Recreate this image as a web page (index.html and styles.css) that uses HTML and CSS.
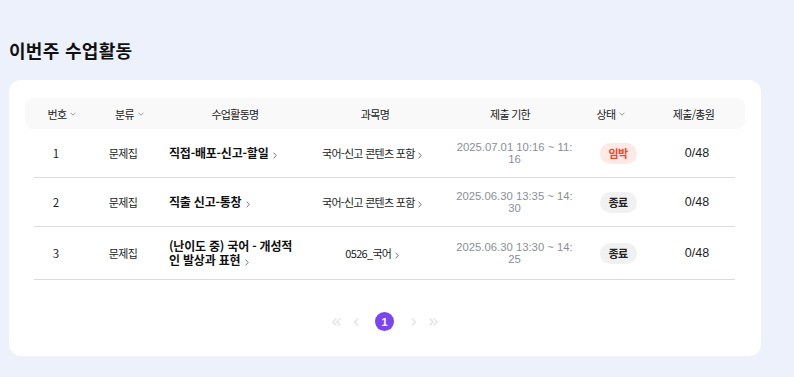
FILE: index.html
```html
<!DOCTYPE html>
<html lang="ko">
<head>
<meta charset="utf-8">
<link rel="stylesheet" href="styles.css">
</head>
<body>
<div class="page">
  <h1 class="title">이번주 수업활동</h1>
  <section class="card">
    <div class="thead">
      <div class="th">번호<svg class="down" viewBox="0 0 6 4"><path d="M0.5 0.7L3 3.2L5.5 0.7"/></svg></div>
      <div class="th">분류<svg class="down" viewBox="0 0 6 4"><path d="M0.5 0.7L3 3.2L5.5 0.7"/></svg></div>
      <div class="th">수업활동명</div>
      <div class="th">과목명</div>
      <div class="th">제출 기한</div>
      <div class="th">상태<svg class="down" viewBox="0 0 6 4"><path d="M0.5 0.7L3 3.2L5.5 0.7"/></svg></div>
      <div class="th">제출/총원</div>
    </div>
    <div class="tbody">
      <div class="tr">
        <div class="td num">1</div>
        <div class="td cat">문제집</div>
        <div class="td act">직접-배포-신고-할일 <svg class="right" viewBox="0 0 4 7"><path d="M0.7 0.7L3.2 3.5L0.7 6.3"/></svg></div>
        <div class="td subj">국어-신고 콘텐츠 포함 <svg class="right" viewBox="0 0 4 7"><path d="M0.7 0.7L3.2 3.5L0.7 6.3"/></svg></div>
        <div class="td due">2025.07.01 10:16 ~ 11:16</div>
        <div class="td state"><span class="badge urgent">임박</span></div>
        <div class="td count">0/48</div>
      </div>
      <div class="tr">
        <div class="td num">2</div>
        <div class="td cat">문제집</div>
        <div class="td act">직출 신고-통창 <svg class="right" viewBox="0 0 4 7"><path d="M0.7 0.7L3.2 3.5L0.7 6.3"/></svg></div>
        <div class="td subj">국어-신고 콘텐츠 포함 <svg class="right" viewBox="0 0 4 7"><path d="M0.7 0.7L3.2 3.5L0.7 6.3"/></svg></div>
        <div class="td due">2025.06.30 13:35 ~ 14:30</div>
        <div class="td state"><span class="badge done">종료</span></div>
        <div class="td count">0/48</div>
      </div>
      <div class="tr">
        <div class="td num">3</div>
        <div class="td cat">문제집</div>
        <div class="td act">(난이도 중) 국어 - 개성적 인 발상과 표현 <svg class="right" viewBox="0 0 4 7"><path d="M0.7 0.7L3.2 3.5L0.7 6.3"/></svg></div>
        <div class="td subj">0526_국어 <svg class="right" viewBox="0 0 4 7"><path d="M0.7 0.7L3.2 3.5L0.7 6.3"/></svg></div>
        <div class="td due">2025.06.30 13:30 ~ 14:25</div>
        <div class="td state"><span class="badge done">종료</span></div>
        <div class="td count">0/48</div>
      </div>
    </div>
    <nav class="pager">
      <span class="pg-arrow"><svg viewBox="0 0 9 8"><path d="M4.3 0.5L1 4L4.3 7.5M8.3 0.5L5 4L8.3 7.5"/></svg></span>
      <span class="pg-arrow"><svg viewBox="0 0 9 8"><path d="M6 0.5L2.7 4L6 7.5"/></svg></span>
      <span class="pg-num">1</span>
      <span class="pg-arrow"><svg viewBox="0 0 9 8"><path d="M3 0.5L6.3 4L3 7.5"/></svg></span>
      <span class="pg-arrow"><svg viewBox="0 0 9 8"><path d="M0.7 0.5L4 4L0.7 7.5M4.7 0.5L8 4L4.7 7.5"/></svg></span>
    </nav>
  </section>
</div>
</body>
</html>
```

FILE: styles.css
```css
* { box-sizing: border-box; }
html, body { margin: 0; padding: 0; }
body {
  background: #edf1fb;
  font-family: "Noto Sans CJK KR", "Noto Sans", sans-serif;
  color: #1d1d1d;
}
.page {
  padding: 37px 33px 22px 9px;
}
.title {
  margin: 0 0 16px 0;
  font-size: 18px;
  line-height: 27px;
  font-weight: 700;
  letter-spacing: 0.3px;
  color: #111;
}
.card {
  background: #fff;
  border-radius: 12px;
  padding: 18px 16px 25px 16px;
}
.thead {
  display: grid;
  grid-template-columns: 74px 61px 150px 130px 140px 62px 1fr;
  height: 31px;
  align-items: center;
  background: #f9f9f9;
  border-radius: 8px;
}
.th {
  display: flex;
  align-items: center;
  justify-content: center;
  font-size: 11px;
  letter-spacing: -0.7px;
  color: #222;
  white-space: nowrap;
}
.down {
  width: 6px;
  height: 4px;
  margin-left: 4px;
  fill: none;
  stroke: #999;
  stroke-width: 1;
}
.tbody {
  padding: 0 10px 0 9px;
}
.tr {
  display: grid;
  grid-template-columns: 44px 83px 143px 136px 148px 58px 1fr;
  align-items: center;
  padding: 12px 0;
  border-bottom: 1px solid #dcdcdc;
}
.td {
  font-size: 11px;
  color: #1d1d1d;
}
.num { text-align: center; font-size: 11.5px; }
.cat { text-align: center; padding-left: 7px; letter-spacing: -0.7px; }
.act {
  padding: 0 8px;
  font-size: 12px;
  font-weight: 700;
  line-height: 14px;
  letter-spacing: -0.2px;
  color: #111;
}
.subj {
  text-align: center;
  letter-spacing: -0.7px;
  line-height: 14px;
}
.right {
  display: inline-block;
  width: 4px;
  height: 7px;
  margin-left: 1px;
  fill: none;
  stroke: #777;
  stroke-width: 1;
  vertical-align: -0.5px;
}
.due {
  padding: 0 14px 0 15px;
  text-align: center;
  font-family: "Liberation Sans", "Noto Sans CJK KR", sans-serif;
  font-size: 11.3px;
  line-height: 12px;
  color: #8b8e96;
  word-break: break-all;
}
.state { display: flex; justify-content: center; padding-left: 2px; }
.badge {
  display: inline-flex;
  align-items: center;
  justify-content: center;
  width: 37px;
  height: 21px;
  border-radius: 11px;
  font-size: 11px;
  font-weight: 700;
  letter-spacing: -0.6px;
}
.urgent { background: #fde9e5; color: #f5452c; }
.done { background: #f1f1f1; color: #222; }
.count {
  text-align: center;
  padding-left: 13px;
  font-family: "Liberation Sans", sans-serif;
  font-size: 12.5px;
}
.pager {
  display: flex;
  justify-content: center;
  align-items: center;
  margin-top: 32px;
  height: 19px;
  padding-right: 1px;
}
.pg-arrow {
  width: 20px;
  height: 19px;
  display: flex;
  align-items: center;
  justify-content: center;
}
.pg-arrow svg {
  width: 9px;
  height: 8px;
  fill: none;
  stroke: #e3e3e3;
  stroke-width: 1.4;
}
.pg-num {
  width: 19px;
  height: 19px;
  margin: 0 9px;
  border-radius: 50%;
  background: #7b45f2;
  color: #fff;
  font-family: "Liberation Sans", sans-serif;
  font-size: 11px;
  font-weight: 700;
  display: flex;
  align-items: center;
  justify-content: center;
}
```
